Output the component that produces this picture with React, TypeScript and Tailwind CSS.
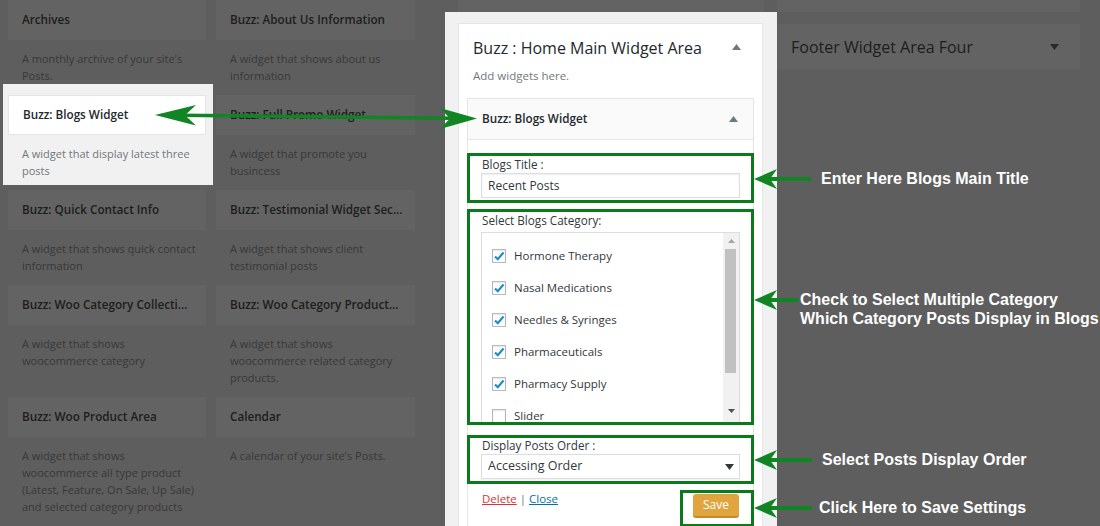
import React from "react";

type Widget = { title: string; lines: string[]; hot?: boolean };

const ROWS: Widget[][] = [
  [
    { title: "Archives", lines: ["A monthly archive of your site's", "Posts."] },
    { title: "Buzz: About Us Information", lines: ["A widget that shows about us", "information"] },
  ],
  [
    { title: "Buzz: Blogs Widget", lines: ["A widget that display latest three", "posts"], hot: true },
    { title: "Buzz: Full Promo Widget", lines: ["A widget that promote you", "busincess"] },
  ],
  [
    { title: "Buzz: Quick Contact Info", lines: ["A widget that shows quick contact", "information"] },
    { title: "Buzz: Testimonial Widget Sec...", lines: ["A widget that shows client", "testimonial posts"] },
  ],
  [
    { title: "Buzz: Woo Category Collecti...", lines: ["A widget that shows", "woocommerce category"] },
    {
      title: "Buzz: Woo Category Product...",
      lines: ["A widget that shows", "woocommerce related category", "products."],
    },
  ],
  [
    {
      title: "Buzz: Woo Product Area",
      lines: [
        "A widget that shows",
        "woocommerce all type product",
        "(Latest, Feature, On Sale, Up Sale)",
        "and selected category products",
      ],
    },
    { title: "Calendar", lines: ["A calendar of your site's Posts."] },
  ],
];

const CATEGORIES = [
  { name: "Hormone Therapy", on: true },
  { name: "Nasal Medications", on: true },
  { name: "Needles & Syringes", on: true },
  { name: "Pharmaceuticals", on: true },
  { name: "Pharmacy Supply", on: true },
  { name: "Slider", on: false },
];

function Caret({ up = true, color = "#72777c" }: { up?: boolean; color?: string }) {
  return (
    <svg width="9" height="6" viewBox="0 0 9 6">
      <path d={up ? "M0 6 L4.5 0 L9 6Z" : "M0 0 L4.5 6 L9 0Z"} fill={color} />
    </svg>
  );
}

function WidgetCell({ w, col }: { w: Widget; col: number }) {
  const pad = col === 0 ? "pl-[5px] pr-[7px]" : "pl-[3px] pr-[8px]";
  return (
    <div className={`${pad} ${w.hot ? "bg-[#f1f1f1] -mt-[11px] pt-[11px] pb-[6px] mb-[5px]" : "mb-[11px]"}`}>
      <div
        className={`h-[40px] flex items-center px-[14px] text-[11.7px] font-semibold whitespace-nowrap ${
          w.hot ? "bg-white border border-[#e5e5e5] text-[#23282d]" : "bg-[#636363] text-[#1d1d1d]"
        }`}
      >
        {w.title}
      </div>
      <div className={`mt-[10px] px-[14px] text-[11px] leading-[17px] ${w.hot ? "text-[#72777c]" : "text-[#383838]"}`}>
        {w.lines.map((l) => (
          <div key={l} className="whitespace-nowrap">
            {l}
          </div>
        ))}
      </div>
    </div>
  );
}

function Check({ on }: { on: boolean }) {
  return (
    <span className="w-[14px] h-[14px] border border-[#b4b9be] bg-white shadow-[inset_0_1px_2px_rgba(0,0,0,0.1)] flex items-center justify-center">
      {on && (
        <svg width="12" height="12" viewBox="0 0 12 12">
          <path d="M2 6.5 L4.8 9.2 L10.5 2.5" stroke="#1e8cbe" strokeWidth="2.2" fill="none" />
        </svg>
      )}
    </span>
  );
}

function Arrow({ tip, tail, y }: { tip: number; tail: number; y: number }) {
  return (
    <g fill="#118424">
      <rect x={tip + 14} y={y - 2} width={tail - tip - 14} height={4} />
      <path d={`M${tip} ${y} L${tip + 23} ${y - 10} L${tip + 16} ${y} L${tip + 23} ${y + 10}Z`} />
    </g>
  );
}

export default function App() {
  return (
    <div className="relative w-[1100px] h-[526px] overflow-hidden bg-[#5e5e5e] flex font-['Open_Sans',sans-serif]">
      {/* available widgets, dimmed */}
      <div className="w-[445px] shrink-0 pl-[3px]">
        <div className="grid grid-cols-[210px_210px]">
          {ROWS.flat().map((w, i) => (
            <WidgetCell key={w.title} w={w} col={i % 2} />
          ))}
        </div>
      </div>

      {/* home main widget area */}
      <div className="w-[332px] shrink-0 flex flex-col">
        <div className="shrink-0 mx-[13px] h-[12px] bg-[#636363]" />
        <div className="flex-1 min-h-0 overflow-hidden bg-[#f1f1f1] pl-[13px] pr-[14px] pt-[11px]">
          <div className="h-[600px] bg-white border border-[#e5e5e5]">
            <div className="flex items-start justify-between pl-[14px] pr-[21px] pt-[13px]">
              <div className="text-[16px] leading-[22px] text-[#23282d]">Buzz : Home Main Widget Area</div>
              <div className="pt-[7px]">
                <Caret />
              </div>
            </div>
            <div className="px-[14px] mt-[8px] text-[11.5px] leading-[17px] text-[#72777c]">Add widgets here.</div>

            <div className="mx-[8px] mt-[14px] border border-[#e5e5e5]">
              <div className="h-[41px] bg-[#fafafa] border-b border-[#e5e5e5] flex items-center justify-between pl-[14px] pr-[15px]">
                <span className="text-[11.7px] font-semibold text-[#23282d]">Buzz: Blogs Widget</span>
                <Caret />
              </div>

              <div className="pt-[13px] -mx-[1px] text-[11.7px] text-[#32373c]">
                <div className="border-[3px] border-[#0b7a1b] pl-[11px] pr-[11px] pb-[2px]">
                  <div className="leading-[16px] pl-[1px]">Blogs Title :</div>
                  <div className="mt-[1px] h-[25px] border border-[#dddddd] shadow-[inset_0_1px_2px_rgba(0,0,0,0.07)] flex items-center px-[6px] text-[12px]">
                    Recent Posts
                  </div>
                </div>

                <div className="mt-[6px] border-[3px] border-[#0b7a1b] pl-[11px] pr-[11px] h-[216px] overflow-hidden">
                  <div className="leading-[16px] pl-[1px]">Select Blogs Category:</div>
                  <div className="mt-[4px] h-[192px] border border-b-0 border-[#dddddd] flex">
                    <div className="flex-1 pt-[7px]">
                      {CATEGORIES.map((c) => (
                        <div key={c.name} className="h-[32px] flex items-center gap-[8px] pl-[10px] text-[11.5px]">
                          <Check on={c.on} />
                          <span>{c.name}</span>
                        </div>
                      ))}
                    </div>
                    <div className="w-[16px] bg-[#f1f1f1] flex flex-col">
                      <div className="h-[16px] flex items-center justify-center">
                        <svg width="7" height="4" viewBox="0 0 7 4">
                          <path d="M0 4 L3.5 0 L7 4Z" fill="#a3a3a3" />
                        </svg>
                      </div>
                      <div className="h-[124px] ml-[2px] mr-[3px] bg-[#c1c1c1]" />
                      <div className="h-[30px]" />
                      <div className="h-[16px] flex items-center justify-center">
                        <svg width="7" height="4" viewBox="0 0 7 4">
                          <path d="M0 0 L3.5 4 L7 0Z" fill="#505050" />
                        </svg>
                      </div>
                    </div>
                  </div>
                </div>

                <div className="mt-[10px] border-[3px] border-[#0b7a1b] pl-[11px] pr-[11px] pb-[2px]">
                  <div className="leading-[14px] pl-[1px]">Display Posts Order :</div>
                  <div className="mt-[2px] h-[25px] border border-[#dddddd] shadow-[0_1px_1px_rgba(0,0,0,0.04)] flex items-center justify-between pl-[6px] pr-[5px] text-[12.5px]">
                    <span>Accessing Order</span>
                    <Caret up={false} color="#32373c" />
                  </div>
                </div>

                <div className="mt-[6px] flex items-start justify-between">
                  <div className="pl-[15px] leading-[17px] text-[11.5px]">
                    <span className="text-[#dc3232] underline">Delete</span>
                    <span className="text-[#72777c]"> | </span>
                    <span className="text-[#0073aa] underline">Close</span>
                  </div>
                  <div className="w-[74px] h-[37px] border-[3px] border-[#0b7a1b] pl-[10px] pt-[1px]">
                    <div className="w-[46px] h-[24px] rounded-[3px] bg-[#e0a53f] border-b-2 border-[#c48a2b] text-white text-[12px] flex items-center justify-center">
                      Save
                    </div>
                  </div>
                </div>
              </div>
            </div>
          </div>
        </div>
      </div>

      {/* footer widget areas, dimmed */}
      <div className="w-[303px] shrink-0 flex flex-col">
        <div className="shrink-0 h-[12px] bg-[#636363]" />
        <div className="shrink-0 mt-[12px] h-[45px] bg-[#636363] flex items-center justify-between pl-[14px] pr-[21px]">
          <span className="text-[16px] text-[#1d1d1d]">Footer Widget Area Four</span>
          <Caret up={false} color="#2a2a2a" />
        </div>
      </div>

      {/* annotations */}
      <svg className="absolute inset-0 pointer-events-none" width="1100" height="526">
        <g fill="#118424">
          <path d="M178 113.5 L452 116.5 L452 120 L178 117Z" />
          <path d="M155 115 L196 105 L185 115.3 L196 125.5Z" />
          <path d="M477 118.5 L440 108 L450 118.4 L440 129Z" />
        </g>
        <Arrow tip={754} tail={811} y={179} />
        <Arrow tip={754} tail={798} y={300} />
        <Arrow tip={754} tail={812} y={460} />
        <Arrow tip={754} tail={812} y={508} />
      </svg>
      <div className="absolute inset-0 pointer-events-none font-['Liberation_Sans',Arial,sans-serif] font-bold text-[16px] text-white leading-[19px]">
        <div className="absolute left-[821px] top-[169px] whitespace-nowrap">Enter Here Blogs Main Title</div>
        <div className="absolute left-[800px] top-[290px] whitespace-nowrap">
          Check to Select Multiple Category
          <br />
          Which Category Posts Display in Blogs
        </div>
        <div className="absolute left-[822px] top-[450px] whitespace-nowrap">Select Posts Display Order</div>
        <div className="absolute left-[819px] top-[498px] whitespace-nowrap">Click Here to Save Settings</div>
      </div>
    </div>
  );
}
